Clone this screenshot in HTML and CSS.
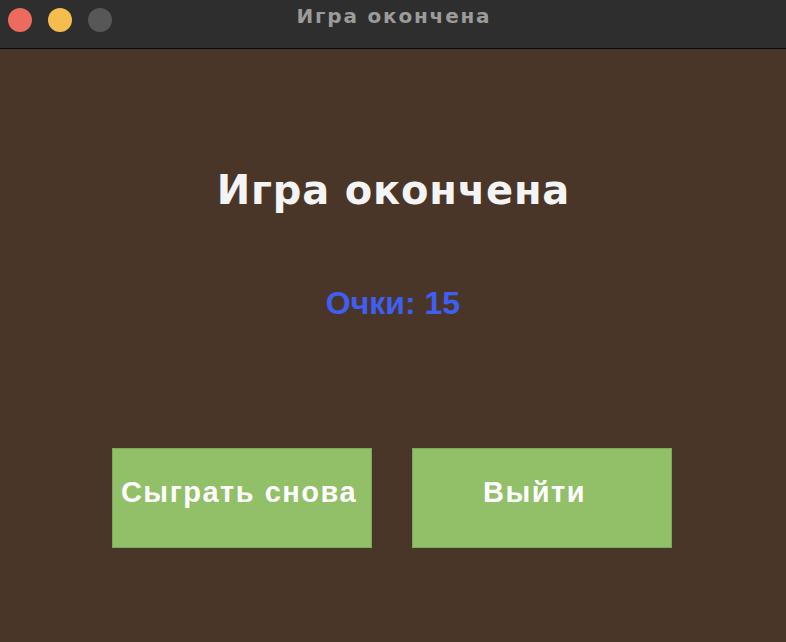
FILE: index.html
```html
<!DOCTYPE html>
<html lang="ru">
<head>
<meta charset="utf-8">
<title>Игра окончена</title>
<link rel="stylesheet" href="styles.css">
</head>
<body>
<div class="window">
  <header class="titlebar">
    <div class="lights">
      <span class="light red"></span>
      <span class="light yellow"></span>
      <span class="light gray"></span>
    </div>
    <div class="wtitle">Игра окончена</div>
  </header>
  <main class="content">
    <h1 class="heading">Игра окончена</h1>
    <p class="score">Очки: 15</p>
    <div class="buttons">
      <button class="btn btn-again">Сыграть снова</button>
      <button class="btn btn-exit">Выйти</button>
    </div>
  </main>
</div>
</body>
</html>
```
FILE: styles.css
```css
* { box-sizing: border-box; }
html, body { margin: 0; padding: 0; }
body {
  width: 786px;
  height: 642px;
  overflow: hidden;
  font-family: "Liberation Sans", Arial, sans-serif;
  background: #4a3628;
}
.window { display: flex; flex-direction: column; height: 642px; }
.titlebar {
  position: relative;
  height: 49px;
  background: #2e2e2e;
  border-bottom: 1px solid #0c0c0c;
  display: flex;
  justify-content: center;
  flex-shrink: 0;
}
.lights {
  position: absolute;
  left: 8px;
  top: 8px;
  display: flex;
  gap: 16px;
}
.light { width: 24px; height: 24px; border-radius: 50%; display: block; }
.red { background: #ed6a5e; }
.yellow { background: #f5bd4f; }
.gray { background: #575757; }
.wtitle {
  color: #9b9b9b;
  font-family: "DejaVu Sans", "Liberation Sans", sans-serif;
  font-weight: bold;
  font-size: 20px;
  letter-spacing: 1.8px;
  line-height: 24px;
  margin-top: 4px;
  padding-left: 2px;
}
.content {
  flex: 1;
  background: #4a3628;
  display: flex;
  flex-direction: column;
  align-items: center;
}
.heading {
  margin: 117px 0 0;
  color: #f4f4f4;
  font-family: "DejaVu Sans", "Liberation Sans", sans-serif;
  font-size: 40px;
  font-weight: bold;
  line-height: 48px;
  letter-spacing: 0.8px;
  padding-left: 1px;
}
.score {
  margin: 70px 0 0;
  color: #3f5ef2;
  font-size: 32px;
  font-weight: bold;
  line-height: 38px;
}
.buttons {
  display: flex;
  gap: 40px;
  margin-top: 126px;
  padding-right: 2px;
}
.btn {
  width: 260px;
  height: 100px;
  background: #92c068;
  border: 1px solid #7fa85a;
  color: #ffffff;
  font-family: "Liberation Sans", Arial, sans-serif;
  font-weight: bold;
  font-size: 29px;
  letter-spacing: 1.5px;
  padding: 0 0 12px;
  display: flex;
  align-items: center;
  justify-content: center;
}
.btn-again { padding-right: 6px; }
.btn-exit { padding-right: 15px; }
```
